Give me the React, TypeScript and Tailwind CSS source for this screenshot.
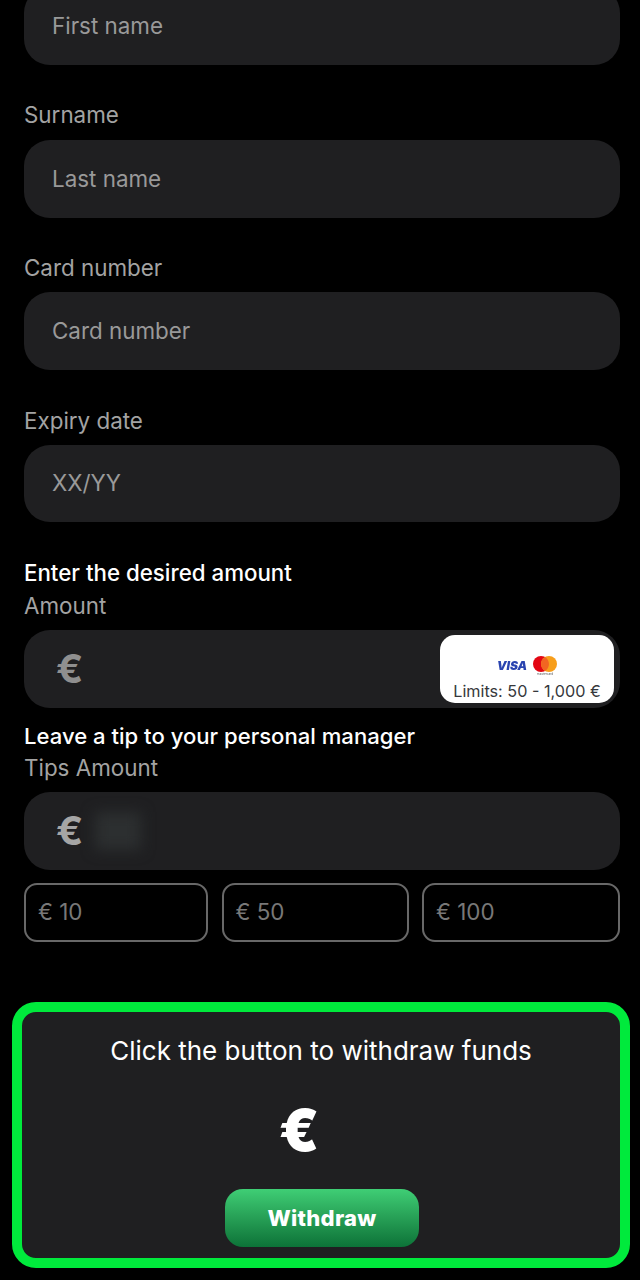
import React from 'react';

const Label: React.FC<{ text: string }> = ({ text }) => (
  <div className="text-[22.4px] leading-[30px] text-[#a3a3a3]">{text}</div>
);

const Field: React.FC<{ placeholder: string; className?: string }> = ({ placeholder, className = 'h-[78px]' }) => (
  <div className={`${className} flex items-center rounded-[26px] bg-[#1f1f21] pb-[1px] pl-[28px] text-[22.4px] text-[#999999]`}>
    {placeholder}
  </div>
);

const Chip: React.FC<{ text: string; className: string }> = ({ text, className }) => (
  <div className={`${className} flex h-[59px] items-center rounded-[13px] border-2 border-[#686868] pb-[2px] pl-[12px] text-[22.4px] text-[#787878]`}>
    {text}
  </div>
);

const LimitsBadge = () => (
  <div className="flex h-[68px] w-[174px] flex-col items-center justify-end rounded-[15px] bg-white pb-[1px]">
    <div className="flex items-center gap-[6px] pb-[1px] blur-[0.4px]">
      <span className="text-[12px] leading-none font-black italic text-[#2a44b0]">VISA</span>
      <div className="flex flex-col items-center">
        <svg width="24" height="16" viewBox="0 0 24 16">
          <circle cx="8" cy="8" r="8" fill="#e30613" />
          <circle cx="16" cy="8" r="8" fill="#f79e1b" />
          <path d="M12 1.1a8 8 0 0 1 0 13.8a8 8 0 0 1 0-13.8z" fill="#f26522" />
        </svg>
        <span className="text-[3px] leading-[4px] text-[#555]">mastercard</span>
      </div>
    </div>
    <div className="mt-[3px] text-[16.2px] leading-[22px] text-[#36383c]">Limits: 50 - 1,000 €</div>
  </div>
);

export default function App() {
  return (
    <div className="h-[1280px] overflow-hidden bg-black font-['Inter',sans-serif]">
      <div className="-mt-[13px] flex flex-col pl-[24px] pr-[20px]">
        <Field placeholder="First name" />

        <div className="mt-[35px]"><Label text="Surname" /></div>
        <div className="mt-[10px]"><Field placeholder="Last name" /></div>

        <div className="mt-[35px]"><Label text="Card number" /></div>
        <div className="mt-[9px]"><Field placeholder="Card number" /></div>

        <div className="mt-[36px]"><Label text="Expiry date" /></div>
        <div className="mt-[9px]"><Field placeholder="XX/YY" className="h-[77px]" /></div>

        <div className="mt-[36px] text-[22.3px] leading-[30px] font-medium text-white">Enter the desired amount</div>
        <div className="mt-[3px]"><Label text="Amount" /></div>
        <div className="mt-[9px] flex h-[78px] items-center justify-between rounded-[26px] bg-[#1f1f21] pl-[32px] pr-[6px]">
          <span className="text-[40px] font-bold text-[#8f8f8f]">€</span>
          <LimitsBadge />
        </div>

        <div className="mt-[13px] text-[22.1px] leading-[30px] font-medium text-white">Leave a tip to your personal manager</div>
        <div className="mt-[2px]"><Label text="Tips Amount" /></div>
        <div className="mt-[9px] flex h-[78px] items-center rounded-[26px] bg-[#1f1f21] pl-[32px]">
          <span className="text-[40px] font-bold text-[#a5a5a5]">€</span>
          <div className="ml-[12px] h-[38px] w-[46px] bg-[#2c2f30] blur-[7px]" />
        </div>

        <div className="mt-[13px] flex gap-[13.5px]">
          <Chip text="€ 10" className="w-[184px]" />
          <Chip text="€ 50" className="w-[187px]" />
          <Chip text="€ 100" className="w-[198px]" />
        </div>
      </div>

      <div className="ml-[12px] mr-[10px] mt-[60px] flex h-[266px] flex-col items-center rounded-[24px] border-[10px] border-[#00ea3c] bg-[#1f1f21]">
        <div className="mt-[23px] text-[26px] leading-[32px] text-white">Click the button to withdraw funds</div>
        <div className="mt-[35px] -ml-[44px] text-[58px] leading-[56px] font-black text-white">€</div>
        <div className="ml-[2px] mt-[31px] flex h-[58px] w-[194px] items-center justify-center rounded-[18px] bg-gradient-to-b from-[#3fce75] to-[#0c7338] text-[22px] font-extrabold tracking-[0.3px] text-white">
          Withdraw
        </div>
      </div>
    </div>
  );
}
